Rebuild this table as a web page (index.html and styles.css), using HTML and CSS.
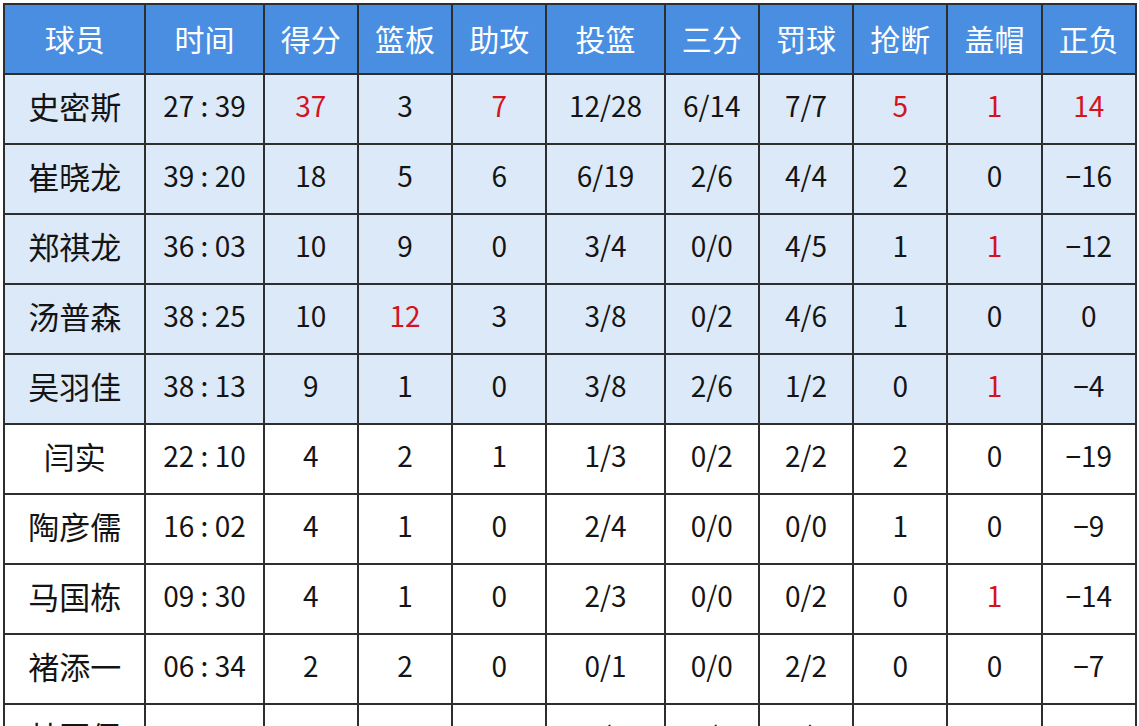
FILE: index.html
```html
<!DOCTYPE html>
<html lang="zh-CN">
<head>
<meta charset="utf-8">
<title>球员数据</title>
<link rel="stylesheet" href="styles.css">
</head>
<body>
<table class="stats">
<colgroup>
<col class="c-name"><col class="c-time"><col class="c-n"><col class="c-n"><col class="c-n"><col class="c-time"><col class="c-n"><col class="c-n"><col class="c-n"><col class="c-n"><col class="c-n">
</colgroup>
<thead>
<tr><th>球员</th><th>时间</th><th>得分</th><th>篮板</th><th>助攻</th><th>投篮</th><th>三分</th><th>罚球</th><th>抢断</th><th>盖帽</th><th>正负</th></tr>
</thead>
<tbody>
<tr class="starter"><td class="name">史密斯</td><td>27 : 39</td><td class="hi">37</td><td>3</td><td class="hi">7</td><td>12/28</td><td>6/14</td><td>7/7</td><td class="hi">5</td><td class="hi">1</td><td class="hi">14</td></tr>
<tr class="starter"><td class="name">崔晓龙</td><td>39 : 20</td><td>18</td><td>5</td><td>6</td><td>6/19</td><td>2/6</td><td>4/4</td><td>2</td><td>0</td><td>−16</td></tr>
<tr class="starter"><td class="name">郑祺龙</td><td>36 : 03</td><td>10</td><td>9</td><td>0</td><td>3/4</td><td>0/0</td><td>4/5</td><td>1</td><td class="hi">1</td><td>−12</td></tr>
<tr class="starter"><td class="name">汤普森</td><td>38 : 25</td><td>10</td><td class="hi">12</td><td>3</td><td>3/8</td><td>0/2</td><td>4/6</td><td>1</td><td>0</td><td>0</td></tr>
<tr class="starter"><td class="name">吴羽佳</td><td>38 : 13</td><td>9</td><td>1</td><td>0</td><td>3/8</td><td>2/6</td><td>1/2</td><td>0</td><td class="hi">1</td><td>−4</td></tr>
<tr><td class="name">闫实</td><td>22 : 10</td><td>4</td><td>2</td><td>1</td><td>1/3</td><td>0/2</td><td>2/2</td><td>2</td><td>0</td><td>−19</td></tr>
<tr><td class="name">陶彦儒</td><td>16 : 02</td><td>4</td><td>1</td><td>0</td><td>2/4</td><td>0/0</td><td>0/0</td><td>1</td><td>0</td><td>−9</td></tr>
<tr><td class="name">马国栋</td><td>09 : 30</td><td>4</td><td>1</td><td>0</td><td>2/3</td><td>0/0</td><td>0/2</td><td>0</td><td class="hi">1</td><td>−14</td></tr>
<tr><td class="name">褚添一</td><td>06 : 34</td><td>2</td><td>2</td><td>0</td><td>0/1</td><td>0/0</td><td>2/2</td><td>0</td><td>0</td><td>−7</td></tr>
<tr><td class="name">林冠儒</td><td>04 : 12</td><td>0</td><td>1</td><td>0</td><td>0/1</td><td>0/1</td><td>0/0</td><td>0</td><td>0</td><td>−3</td></tr>
</tbody>
</table>
</body>
</html>
```
FILE: styles.css
```css
html, body {
  margin: 0;
  padding: 0;
  background: #ffffff;
  overflow: hidden;
}
body {
  font-family: "Noto Sans CJK SC", "Noto Sans", sans-serif;
}
.stats {
  margin: 3px 0 0 3px;
  border-collapse: collapse;
  table-layout: fixed;
  width: 1134px;
}
.c-name { width: 141px; }
.c-time { width: 118px; }
.c-n { width: 94px; }
.stats th, .stats td {
  border: 2px solid #2e2e2e;
  text-align: center;
  vertical-align: middle;
  padding: 0;
  white-space: nowrap;
}
.stats th {
  height: 66px;
  background: #4a8ee2;
  color: #ffffff;
  font-weight: 400;
  font-size: 30px;
  line-height: 1;
  padding-bottom: 2px;
}
.stats td {
  height: 60px;
  padding-bottom: 8px;
  color: #141414;
  font-size: 28px;
  line-height: 1;
}
.stats td.name {
  font-size: 31px;
}
.stats tr.starter td {
  background: #dce9f8;
}
.stats td.hi {
  color: #d4141c;
}
```
